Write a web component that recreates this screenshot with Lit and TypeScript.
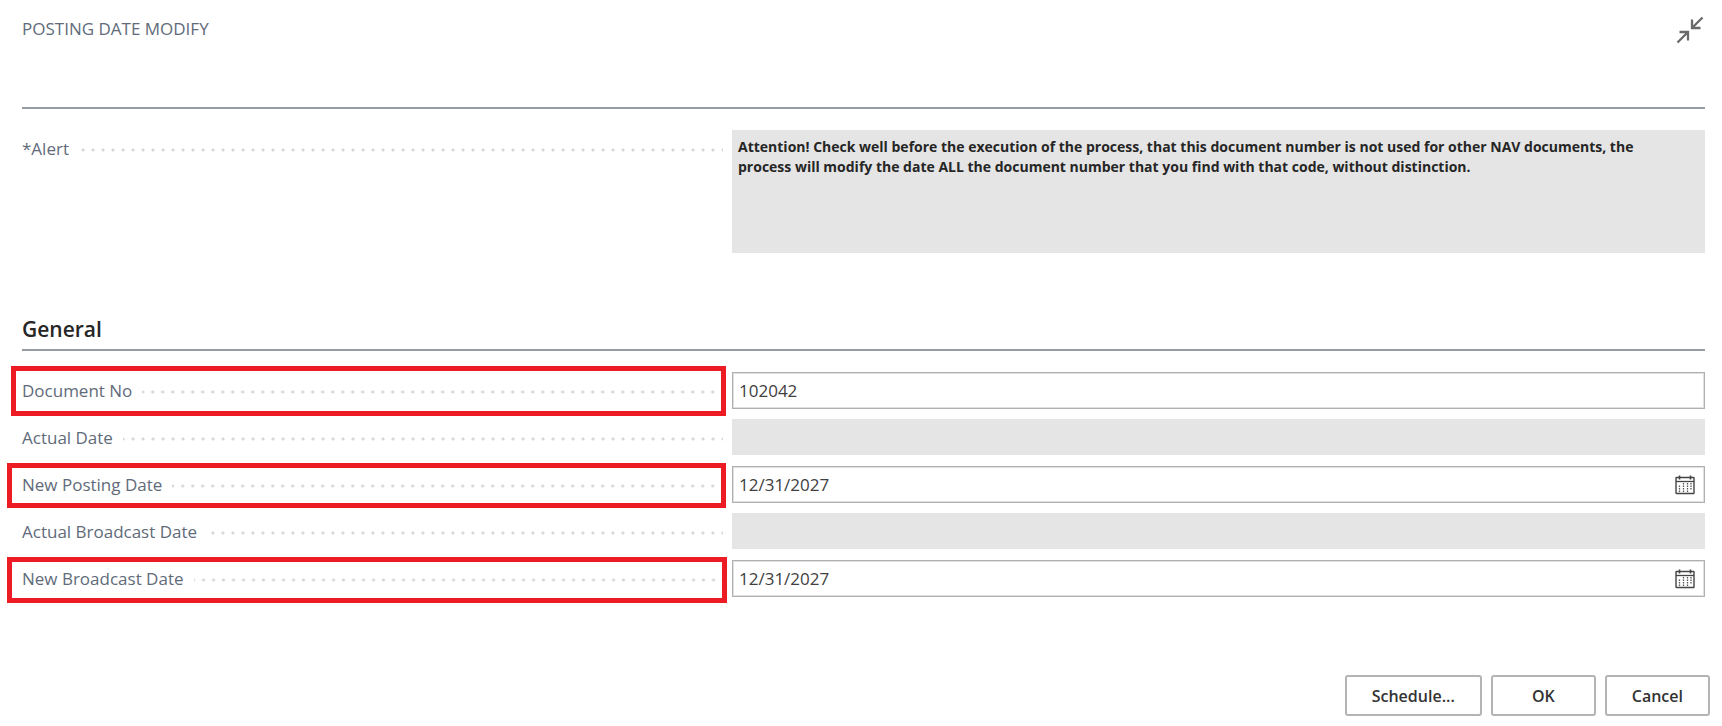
import { LitElement, html, css, svg, nothing } from "lit";
import { customElement, property } from "lit/decorators.js";

type Mark = "" | "first" | "second" | "third";

interface Field {
  id: string;
  label: string;
  value: string;
  kind: "text" | "date" | "readonly";
  mark: Mark;
}

const FIELDS: Field[] = [
  { id: "document-no", label: "Document No", value: "102042", kind: "text", mark: "first" },
  { id: "actual-date", label: "Actual Date", value: "", kind: "readonly", mark: "" },
  { id: "new-posting-date", label: "New Posting Date", value: "12/31/2027", kind: "date", mark: "second" },
  { id: "actual-broadcast-date", label: "Actual Broadcast Date", value: "", kind: "readonly", mark: "" },
  { id: "new-broadcast-date", label: "New Broadcast Date", value: "12/31/2027", kind: "date", mark: "third" },
];

const ALERT_TEXT =
  "Attention! Check well before the execution of the process, that this document number is not used for other NAV documents, the process will modify the date ALL the document number that you find with that code, without distinction.";

const collapseIcon = svg`<svg width="28" height="28" viewBox="0 0 28 28" fill="none" stroke="#6a6a6a" stroke-width="2.3" aria-hidden="true">
  <path d="M26.5 1.5 L16 12 M16 3.5 V12 H24.5"/>
  <path d="M1.5 26.5 L12 16 M3.5 16 H12 V24.5"/>
</svg>`;

const calendarIcon = svg`<svg width="20" height="20" viewBox="0 0 20 20" fill="none" stroke="#444" aria-hidden="true">
  <rect x="1" y="2.5" width="18" height="16" rx="0.5" stroke-width="1.4"/>
  <path d="M1 6.5 H19" stroke-width="1.3"/>
  <path d="M4.5 0.5 V4.5 M15.5 0.5 V4.5" stroke-width="1.6"/>
  <path d="M4.5 10.5 V17 M8.5 8 V17 M12.5 8 V17 M16 8 V14.5" stroke="#555" stroke-width="1.3" stroke-dasharray="1.6 0.9"/>
</svg>`;

const captionStyles = css`
  .caption {
    display: flex;
    align-items: center;
    gap: 10px;
    height: 37px;
    color: #5f6b7a;
  }
  .name {
    line-height: 24px;
    white-space: nowrap;
  }
  .dots {
    flex: 1;
    height: 4px;
    margin-top: 3px;
    background: radial-gradient(circle, #d3d6da 1px, transparent 2px) right 5px center / 10px 4px repeat-x;
  }
`;

@customElement("form-row")
class FormRow extends LitElement {
  @property({ attribute: false }) field!: Field;

  static styles = [
    captionStyles,
    css`
      :host {
        display: block;
      }
      .row {
        display: grid;
        grid-template-columns: 701fr 973fr;
        column-gap: 9px;
        align-items: start;
      }
      .caption {
        position: relative;
      }
      .mark {
        position: absolute;
        border: 5px solid #ed1c24;
        pointer-events: none;
      }
      .first {
        inset: -6px -3px -7px -11px;
      }
      .second {
        inset: -3px -3px -5px -15px;
      }
      .third {
        inset: -3px -4px -6px -15px;
      }
      .box {
        display: flex;
        align-items: center;
        box-sizing: border-box;
        height: 37px;
        border: 1px solid #b0b0b0;
        box-shadow: inset 0 0 0 1px #e0e0e0;
        background: #fff;
      }
      .readonly {
        height: 36px;
        border: 0;
        box-shadow: none;
        background: #e5e5e5;
      }
      .input {
        flex: 1;
        min-width: 0;
        height: 100%;
        box-sizing: border-box;
        padding: 0 6px;
        border: 0;
        outline: 0;
        background: transparent;
        color: #404040;
        font: inherit;
      }
      .pick {
        display: flex;
        padding: 0;
        margin-right: 9px;
        border: 0;
        background: none;
      }
    `,
  ];

  render() {
    const f = this.field;
    return html`<div class="row">
      <div class="caption">
        <label class="name" for=${f.id}>${f.label}</label>
        <span class="dots"></span>
        ${f.mark ? html`<span class="mark ${f.mark}"></span>` : nothing}
      </div>
      <div class="box ${f.kind}">
        <input class="input" id=${f.id} type="text" .value=${f.value} ?readonly=${f.kind === "readonly"} />
        ${f.kind === "date"
          ? html`<button class="pick" type="button" aria-label="Choose date">${calendarIcon}</button>`
          : nothing}
      </div>
    </div>`;
  }
}

@customElement("app-root")
class AppRoot extends LitElement {
  static styles = [
    captionStyles,
    css`
      :host {
        display: block;
        background: #fff;
        font-family: "Segoe UI", "Open Sans", "Noto Sans", sans-serif;
        font-size: 17px;
        color: #5f6b7a;
      }
      .header {
        display: flex;
        justify-content: space-between;
        align-items: flex-start;
        margin: 0 17px 0 22px;
        padding-top: 16px;
        height: 91px;
        border-bottom: 2px solid #969ba6;
      }
      .title {
        margin: 0;
        font-size: 17px;
        line-height: 26px;
        font-weight: 400;
      }
      .collapse {
        display: flex;
        padding: 0;
        margin-right: 1px;
        border: 0;
        background: none;
      }
      .content {
        padding: 21px 17px 0 22px;
      }
      .alert-row {
        display: grid;
        grid-template-columns: 701fr 973fr;
        column-gap: 9px;
        align-items: start;
      }
      .alert {
        display: block;
        box-sizing: border-box;
        width: 100%;
        height: 123px;
        padding: 7px 24px 7px 6px;
        border: 0;
        outline: 0;
        resize: none;
        background: #e5e5e5;
        color: #262626;
        font-family: inherit;
        font-size: 14px;
        line-height: 20px;
        font-weight: 700;
      }
      .section {
        margin: 61px 0 21px;
        padding-bottom: 5px;
        border-bottom: 2px solid #969ba6;
        font-size: 21px;
        line-height: 30px;
        font-weight: 600;
        color: #262626;
      }
      .fields {
        display: grid;
        gap: 10px;
      }
      .footer {
        display: flex;
        justify-content: flex-end;
        gap: 9px;
        padding: 78px 12px 10px;
      }
      .action {
        box-sizing: border-box;
        min-width: 105px;
        height: 41px;
        padding: 0 25px;
        border: 2px solid #b4b4b4;
        border-radius: 3px;
        background: #fff;
        color: #333;
        font-family: inherit;
        font-size: 16px;
        font-weight: 600;
      }
    `,
  ];

  render() {
    return html`
      <header class="header">
        <h1 class="title">POSTING DATE MODIFY</h1>
        <button class="collapse" type="button" aria-label="Collapse">${collapseIcon}</button>
      </header>
      <main class="content">
        <div class="alert-row">
          <div class="caption">
            <label class="name" for="alert">*Alert</label>
            <span class="dots"></span>
          </div>
          <textarea class="alert" id="alert" readonly .value=${ALERT_TEXT}></textarea>
        </div>
        <h2 class="section">General</h2>
        <div class="fields">
          ${FIELDS.map((field) => html`<form-row .field=${field}></form-row>`)}
        </div>
      </main>
      <footer class="footer">
        <button class="action" type="button">Schedule...</button>
        <button class="action" type="button">OK</button>
        <button class="action" type="button">Cancel</button>
      </footer>
    `;
  }
}
